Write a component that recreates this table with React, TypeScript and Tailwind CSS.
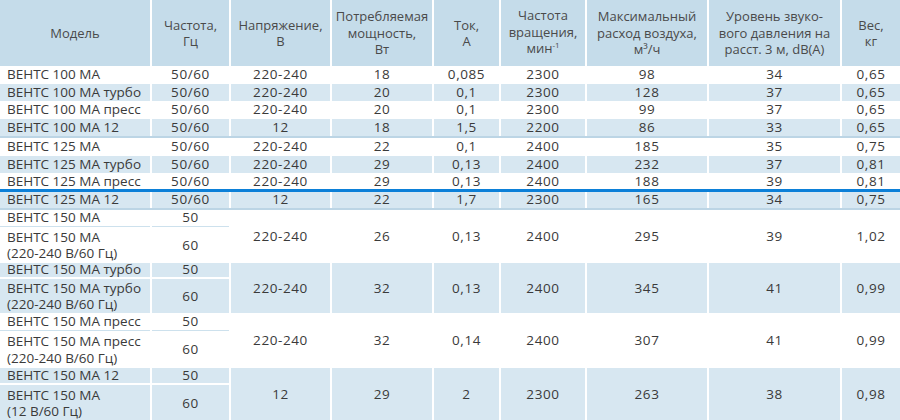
import type { FC, ReactNode } from 'react'

const BLUE = 'bg-[#d7e7f1]'
const NUM = 'tracking-[0.6px]'

type Row = { name: string; cells: string[]; blue: boolean }

const simpleRows: Row[][] = [
  [
    { name: 'ВЕНТС 100 МА', cells: ['50/60', '220-240', '18', '0,085', '2300', '98', '34', '0,65'], blue: false },
    { name: 'ВЕНТС 100 МА турбо', cells: ['50/60', '220-240', '20', '0,1', '2300', '128', '37', '0,65'], blue: true },
    { name: 'ВЕНТС 100 МА пресс', cells: ['50/60', '220-240', '20', '0,1', '2300', '99', '37', '0,65'], blue: false },
    { name: 'ВЕНТС 100 МА 12', cells: ['50/60', '12', '18', '1,5', '2200', '86', '33', '0,65'], blue: true },
  ],
  [
    { name: 'ВЕНТС 125 МА', cells: ['50/60', '220-240', '22', '0,1', '2400', '185', '35', '0,75'], blue: false },
    { name: 'ВЕНТС 125 МА турбо', cells: ['50/60', '220-240', '29', '0,13', '2400', '232', '37', '0,81'], blue: true },
    { name: 'ВЕНТС 125 МА пресс', cells: ['50/60', '220-240', '29', '0,13', '2400', '188', '39', '0,81'], blue: false },
    { name: 'ВЕНТС 125 МА 12', cells: ['50/60', '12', '22', '1,7', '2300', '165', '34', '0,75'], blue: true },
  ],
]

type Group = { first: string; second: ReactNode; cells: string[]; blue: boolean }

const groups: Group[] = [
  {
    first: 'ВЕНТС 150 МА',
    second: <>ВЕНТС 150 МА<br />(220-240 В/60 Гц)</>,
    cells: ['220-240', '26', '0,13', '2400', '295', '39', '1,02'],
    blue: false,
  },
  {
    first: 'ВЕНТС 150 МА турбо',
    second: <>ВЕНТС 150 МА турбо<br />(220-240 В/60 Гц)</>,
    cells: ['220-240', '32', '0,13', '2400', '345', '41', '0,99'],
    blue: true,
  },
  {
    first: 'ВЕНТС 150 МА пресс',
    second: <>ВЕНТС 150 МА пресс<br />(220-240 В/60 Гц)</>,
    cells: ['220-240', '32', '0,14', '2400', '307', '41', '0,99'],
    blue: false,
  },
  {
    first: 'ВЕНТС 150 МА 12',
    second: <>ВЕНТС 150 МА<br />(12 В/60 Гц)</>,
    cells: ['12', '29', '2', '2300', '263', '38', '0,98'],
    blue: true,
  },
]

const HeadCell: FC<{ children: ReactNode }> = ({ children }) => (
  <div className="flex items-center justify-center bg-[#c5dcea] text-center text-[13px] leading-[16.5px] text-[#4a4a4a]">
    {children}
  </div>
)

const Separator: FC = () => <div className="col-span-9 bg-[#bcd5e5]" />

export default function App() {
  return (
    <div
      className="relative h-[420px] w-[900px] overflow-hidden bg-white text-[13.5px] text-[#3a3a3a]"
      style={{ fontFamily: '"Open Sans", "Noto Sans", sans-serif' }}
    >
      <div className="grid grid-cols-[150px_77px_99px_100px_65px_84px_120px_131px_58px] grid-rows-[66px_repeat(4,17.5px)_2px_repeat(4,17.5px)_2px_17px_36px_16px_34px_18px_37px_17px_36px] gap-x-[2px]">
        <HeadCell>Модель</HeadCell>
        <HeadCell>Частота,<br />Гц</HeadCell>
        <HeadCell>Напряжение,<br />В</HeadCell>
        <HeadCell>Потребляемая<br />мощность,<br />Вт</HeadCell>
        <HeadCell>Ток,<br />А</HeadCell>
        <HeadCell>
          <span>
            Частота<br />вращения,<br />мин<span className="relative -top-[5px] text-[8px]">-1</span>
          </span>
        </HeadCell>
        <HeadCell>Максимальный<br />расход воздуха,<br />м³/ч</HeadCell>
        <HeadCell>Уровень звуко-<br />вого давления на<br />расст. 3 м, dB(A)</HeadCell>
        <HeadCell>Вес,<br />кг</HeadCell>

        {simpleRows.map((block, bi) => (
          <div key={bi} className="contents">
            {block.map((row) => (
              <div key={row.name} className="contents">
                <div className={`flex items-center pl-[7px] leading-none ${row.blue ? BLUE : ''}`}>{row.name}</div>
                {row.cells.map((c, i) => (
                  <div key={i} className={`flex items-center justify-center leading-none ${NUM} ${row.blue ? BLUE : ''}`}>
                    {c}
                  </div>
                ))}
              </div>
            ))}
            <Separator />
          </div>
        ))}

        {groups.map((g) => {
          const bg = g.blue ? BLUE : ''
          const line = g.blue ? 'border-b-2 border-white' : 'border-b border-[#cde1ed]'
          return (
            <div key={g.first + g.cells[4]} className="contents">
              <div className={`flex items-center pl-[7px] leading-none ${bg} ${line}`}>{g.first}</div>
              <div className={`flex items-center justify-center leading-none ${NUM} ${bg} ${line}`}>50</div>
              {g.cells.map((c, i) => (
                <div key={i} className={`row-span-2 flex items-center justify-center ${NUM} ${bg}`}>
                  {c}
                </div>
              ))}
              <div className={`flex items-center pl-[7px] leading-[16.5px] ${bg}`}>
                <span>{g.second}</span>
              </div>
              <div className={`flex items-center justify-center ${NUM} ${bg}`}>60</div>
            </div>
          )
        })}
      </div>

      <div className="absolute left-0 right-0 top-[189px] h-[3px] bg-[#0c80d8]" />
    </div>
  )
}
